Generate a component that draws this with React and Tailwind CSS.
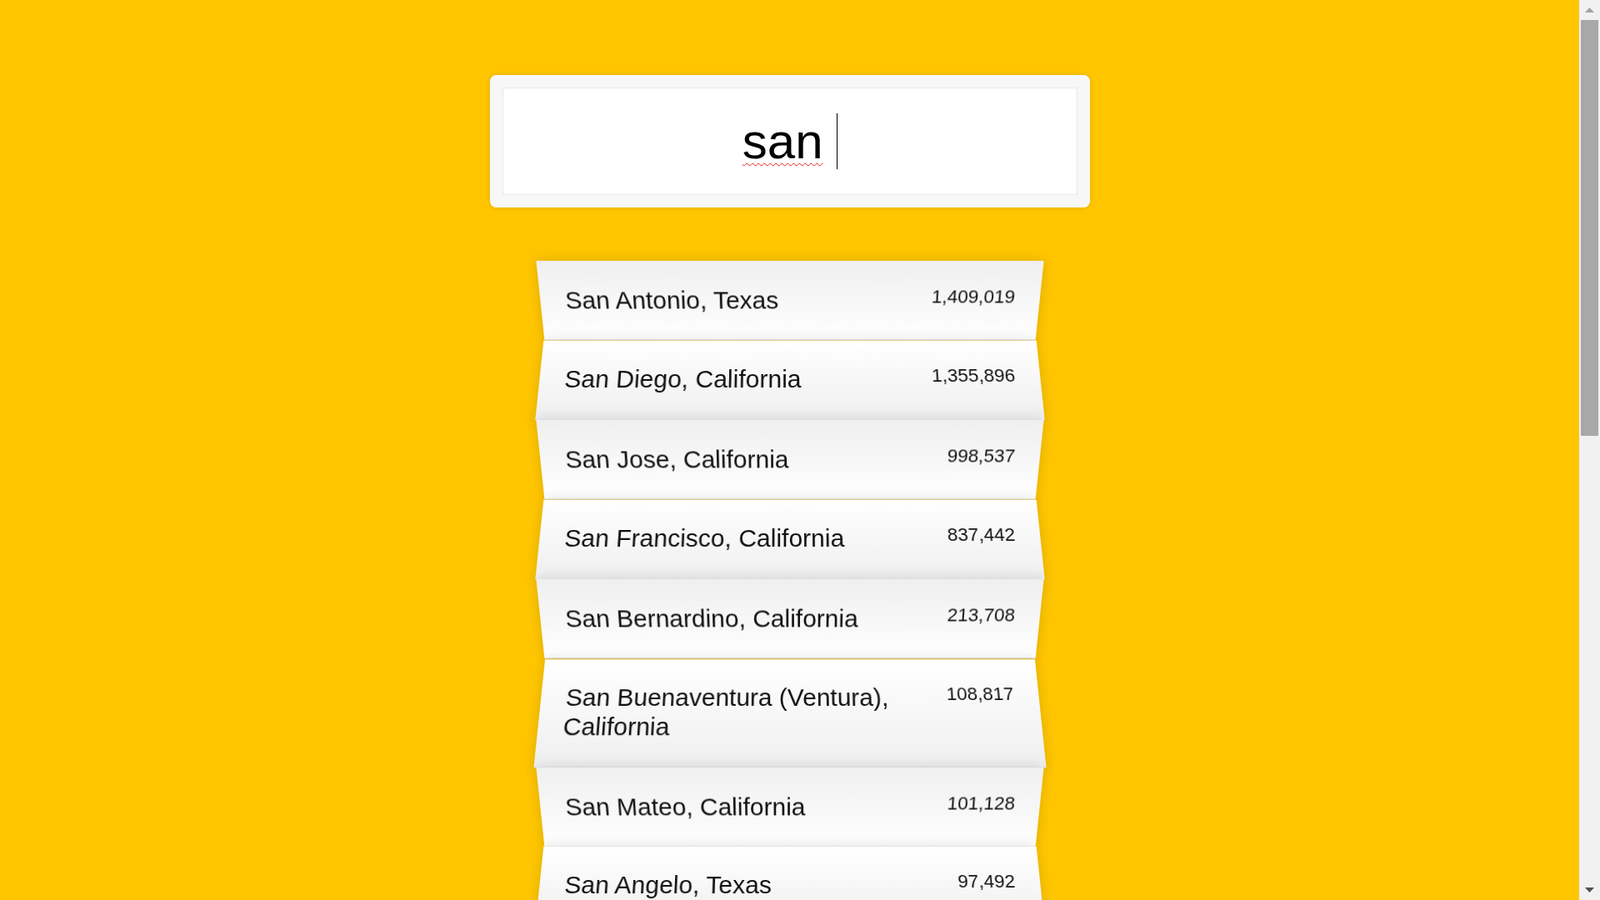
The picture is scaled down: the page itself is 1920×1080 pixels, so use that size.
const cities = [
    { name: 'San Antonio, Texas', population: '1,409,019' },
    { name: 'San Diego, California', population: '1,355,896' },
    { name: 'San Jose, California', population: '998,537' },
    { name: 'San Francisco, California', population: '837,442' },
    { name: 'San Bernardino, California', population: '213,708' },
    { name: 'San Buenaventura (Ventura), California', population: '108,817' },
    { name: 'San Mateo, California', population: '101,128' },
    { name: 'San Angelo, Texas', population: '97,492' },
    { name: 'San Marcos, California', population: '89,387' },
    { name: 'San Leandro, California', population: '87,965' },
];

const Suggestion = ({ city, index }) => {
    // odd / even rows fold opposite ways, like the accordion look
    const isEven = index % 2 === 1;
    const fold = isEven
        ? 'bg-[linear-gradient(to_bottom,#ffffff_0%,#efefef_100%)] [transform:perspective(150px)_rotateX(3deg)_translateY(3px)_scale(1.001)]'
        : 'bg-[linear-gradient(to_top,#ffffff_0%,#efefef_100%)] [transform:perspective(150px)_rotateX(-3deg)_translateY(4.5px)]';

    return (
        <li className={`flex justify-between gap-4 p-[30px] list-none border-b-[1.5px] border-[#d8d8d8] shadow-[0_0_15px_rgba(0,0,0,0.14)] ${fold}`}>
            <span className="text-[30px] leading-[34.5px] text-[#111]">{city.name}</span>
            <span className="text-[22.5px] leading-[26px] text-[#111] whitespace-nowrap">{city.population}</span>
        </li>
    );
};

const Scrollbar = () => (
    <div className="w-[25px] h-full shrink-0 bg-[#f1f1f1] flex flex-col">
        <div className="h-[24px] flex items-center justify-center">
            <svg width="11" height="6" viewBox="0 0 11 6">
                <polygon points="0,6 5.5,0 11,6" fill="#a3a3a3" />
            </svg>
        </div>
        <div className="h-[499px] mx-[2px] bg-[#a8a8a8]"></div>
        <div className="flex-1"></div>
        <div className="h-[24px] flex items-center justify-center">
            <svg width="11" height="6" viewBox="0 0 11 6">
                <polygon points="0,0 11,0 5.5,6" fill="#505050" />
            </svg>
        </div>
    </div>
);

const App = () => {
    return (
        <div className="h-screen flex overflow-hidden bg-[#ffc600] font-['Liberation_Sans',Arial,sans-serif]">
            <div className="flex-1 h-full overflow-hidden">
                <form className="w-[720px] mx-auto pt-[90px]" onSubmit={e => e.preventDefault()}>
                    {/* Search box */}
                    <div className="h-[159px] bg-white border-[15px] border-[#f7f7f7] rounded-[7.5px] shadow-[0_0_7.5px_rgba(0,0,0,0.12)]">
                        <div className="h-full flex items-center justify-center shadow-[inset_0_0_3px_rgba(0,0,0,0.19)] text-[60px] leading-[69px] text-black">
                            <span className="underline decoration-wavy decoration-[#e02020] decoration-[1px] underline-offset-[5px]">san</span>
                            <span className="w-[16.7px]"></span>
                            <span className="w-px h-[67px] bg-black -mr-px"></span>
                        </div>
                    </div>

                    {/* Suggestions */}
                    <ul className="w-[600px] mx-auto mt-[60px] p-0 m-0">
                        {cities.map((city, i) => (
                            <Suggestion key={city.name} city={city} index={i} />
                        ))}
                    </ul>
                </form>
            </div>
            <Scrollbar />
        </div>
    );
};

export default App;
